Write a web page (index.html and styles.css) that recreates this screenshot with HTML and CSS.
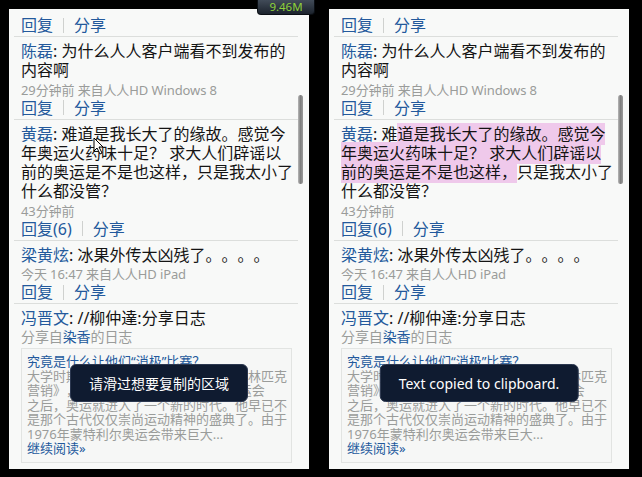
FILE: index.html
```html
<!DOCTYPE html>
<html lang="zh-CN">
<head>
<meta charset="utf-8">
<title>人人 - 复制文本</title>
<link rel="stylesheet" href="styles.css">
</head>
<body>
<div class="screen">
  <div class="badge">9.46M</div>

  <div class="phone">
    <div class="feed">
      <div class="item item-cut">
        <div class="actions"><a class="link">回复</a><span class="bar"></span><a class="link">分享</a></div>
      </div>
      <div class="item">
        <p class="text"><a class="name">陈磊</a>: 为什么人人客户端看不到发布的<br>内容啊</p>
        <div class="meta">29分钟前 来自人人HD Windows 8</div>
        <div class="actions"><a class="link">回复</a><span class="bar"></span><a class="link">分享</a></div>
      </div>
      <div class="item">
        <p class="text"><a class="name">黄磊</a>: 难道是我长大了的缘故。感觉今<br>年奥运火药味十足？ 求大人们辟谣以<br>前的奥运是不是也这样，只是我太小了<br>什么都没管？</p>
        <div class="meta">43分钟前</div>
        <div class="actions"><a class="link">回复(6)</a><span class="bar"></span><a class="link">分享</a></div>
      </div>
      <div class="item">
        <p class="text"><a class="name">梁黄炫</a>: 冰果外传太凶残了。。。。</p>
        <div class="meta">今天 16:47 来自人人HD iPad</div>
        <div class="actions"><a class="link">回复</a><span class="bar"></span><a class="link">分享</a></div>
      </div>
      <div class="item item-last">
        <p class="text"><a class="name">冯晋文</a>: //柳仲達:分享日志</p>
        <div class="meta meta-share">分享自<a class="link">染香</a>的日志</div>
        <div class="blog">
          <div class="blog-title">究竟是什么让他们“消极”比赛？</div>
          <div class="blog-body">大学时期曾经读过一本书，书名叫《奥林匹克<br>营销》，书中说自从1984年洛杉矶奥运会<br>之后，奥运就进入了一个新的时代。他早已不<br>是那个古代仅仅崇尚运动精神的盛典了。由于<br>1976年蒙特利尔奥运会带来巨大...</div>
          <a class="more">继续阅读»</a>
        </div>
      </div>
    </div>
    <div class="scrollbar"></div>
    <svg class="cursor" width="12" height="18" viewBox="0 0 12 18"><path d="M1 1 L1 14 L4 11 L7 17 L9 16 L6 10 L10 10 Z" fill="#fff" stroke="#000" stroke-width="1"/></svg>
    <div class="toast">请滑过想要复制的区域</div>
  </div>

  <div class="phone">
    <div class="feed">
      <div class="item item-cut">
        <div class="actions"><a class="link">回复</a><span class="bar"></span><a class="link">分享</a></div>
      </div>
      <div class="item">
        <p class="text"><a class="name">陈磊</a>: 为什么人人客户端看不到发布的<br>内容啊</p>
        <div class="meta">29分钟前 来自人人HD Windows 8</div>
        <div class="actions"><a class="link">回复</a><span class="bar"></span><a class="link">分享</a></div>
      </div>
      <div class="item">
        <p class="text"><a class="name">黄磊</a>: 难<span class="sel">道是我长大了的缘故。感觉今</span><br><span class="sel">年奥运火药味十足？ 求大人们辟谣以</span><br><span class="sel">前的奥运是不是也这样，</span>只是我太小了<br>什么都没管？</p>
        <div class="meta">43分钟前</div>
        <div class="actions"><a class="link">回复(6)</a><span class="bar"></span><a class="link">分享</a></div>
      </div>
      <div class="item">
        <p class="text"><a class="name">梁黄炫</a>: 冰果外传太凶残了。。。。</p>
        <div class="meta">今天 16:47 来自人人HD iPad</div>
        <div class="actions"><a class="link">回复</a><span class="bar"></span><a class="link">分享</a></div>
      </div>
      <div class="item item-last">
        <p class="text"><a class="name">冯晋文</a>: //柳仲達:分享日志</p>
        <div class="meta meta-share">分享自<a class="link">染香</a>的日志</div>
        <div class="blog">
          <div class="blog-title">究竟是什么让他们“消极”比赛？</div>
          <div class="blog-body">大学时期曾经读过一本书，书名叫《奥林匹克<br>营销》，书中说自从1984年洛杉矶奥运会<br>之后，奥运就进入了一个新的时代。他早已不<br>是那个古代仅仅崇尚运动精神的盛典了。由于<br>1976年蒙特利尔奥运会带来巨大...</div>
          <a class="more">继续阅读»</a>
        </div>
      </div>
    </div>
    <div class="scrollbar"></div>
    <div class="toast">Text copied to clipboard.</div>
  </div>
</div>
</body>
</html>
```

FILE: styles.css
```css
* { box-sizing: border-box; }

html, body {
  margin: 0;
  padding: 0;
  background: #000;
}

body {
  font-family: "Noto Sans", "Noto Sans CJK SC", sans-serif;
  color: #141414;
  width: 642px;
  height: 477px;
  overflow: hidden;
  text-spacing-trim: space-all;
}

.screen {
  position: relative;
  display: flex;
  gap: 20px;
  padding: 9px 0 0 9px;
}

.badge {
  position: absolute;
  left: 257px;
  top: 0;
  width: 58px;
  height: 15px;
  z-index: 5;
  border-radius: 0 0 4px 4px;
  background: linear-gradient(#414b58, #1c232d);
  border: 1px solid #0b0f14;
  border-top: none;
  color: #8fd13a;
  font-family: "Noto Sans", sans-serif;
  font-size: 11.5px;
  line-height: 14px;
  text-align: center;
}

.phone {
  position: relative;
  width: 300px;
  height: 460px;
  background: #f8f9f8;
  overflow: hidden;
}

.feed {
  display: flex;
  flex-direction: column;
  padding-top: 7px;
}

.item {
  margin: 0 11px 0 5px;
  padding: 5px 0 2px 7px;
  border-bottom: 1px solid #dcdedc;
}

.item-cut { padding-top: 0; }
.item-last { border-bottom: none; }

.text {
  margin: 0;
  font-size: 16px;
  line-height: 19.3px;
  white-space: nowrap;
}

.name, .link, .more {
  color: #23599c;
  text-decoration: none;
}

.meta {
  font-size: 13px;
  line-height: 18px;
  color: #9a9c9a;
  white-space: nowrap;
  letter-spacing: -0.1px;
}

.meta-share {
  font-size: 14px;
  line-height: 15px;
  margin-top: 1px;
}

.actions {
  display: flex;
  align-items: center;
  font-size: 16px;
  line-height: 18px;
}

.bar {
  width: 1px;
  height: 15px;
  background: #cfd1cf;
  margin: 0 10px;
}

.sel {
  background: #efc9eb;
}

.blog {
  margin: 4px 6px 0 0;
  padding: 4.5px 4px 6px 5px;
  border: 1px solid #e2e4e2;
  background: #f6f7f6;
}

.blog-title {
  color: #23599c;
  font-size: 13px;
  line-height: 15px;
  white-space: nowrap;
}

.blog-body {
  color: #9a9c9a;
  font-size: 13px;
  line-height: 14.5px;
  white-space: nowrap;
}

.more {
  display: block;
  font-size: 13px;
  line-height: 15px;
}

.scrollbar {
  position: absolute;
  right: 6px;
  top: 86px;
  width: 5px;
  height: 89px;
  border-radius: 3px;
  background: linear-gradient(90deg, #b8b8b8, #7e7e7e 50%, #9a9a9a);
}

.cursor {
  position: absolute;
  left: 84px;
  top: 128px;
}

.toast {
  position: absolute;
  top: 355px;
  left: 50%;
  transform: translateX(-50%);
  height: 38px;
  padding: 0 18px;
  display: flex;
  align-items: center;
  border-radius: 6px;
  background: #0f1b30;
  border: 1px solid #2c3850;
  color: #fff;
  font-size: 14px;
  white-space: nowrap;
}
```
